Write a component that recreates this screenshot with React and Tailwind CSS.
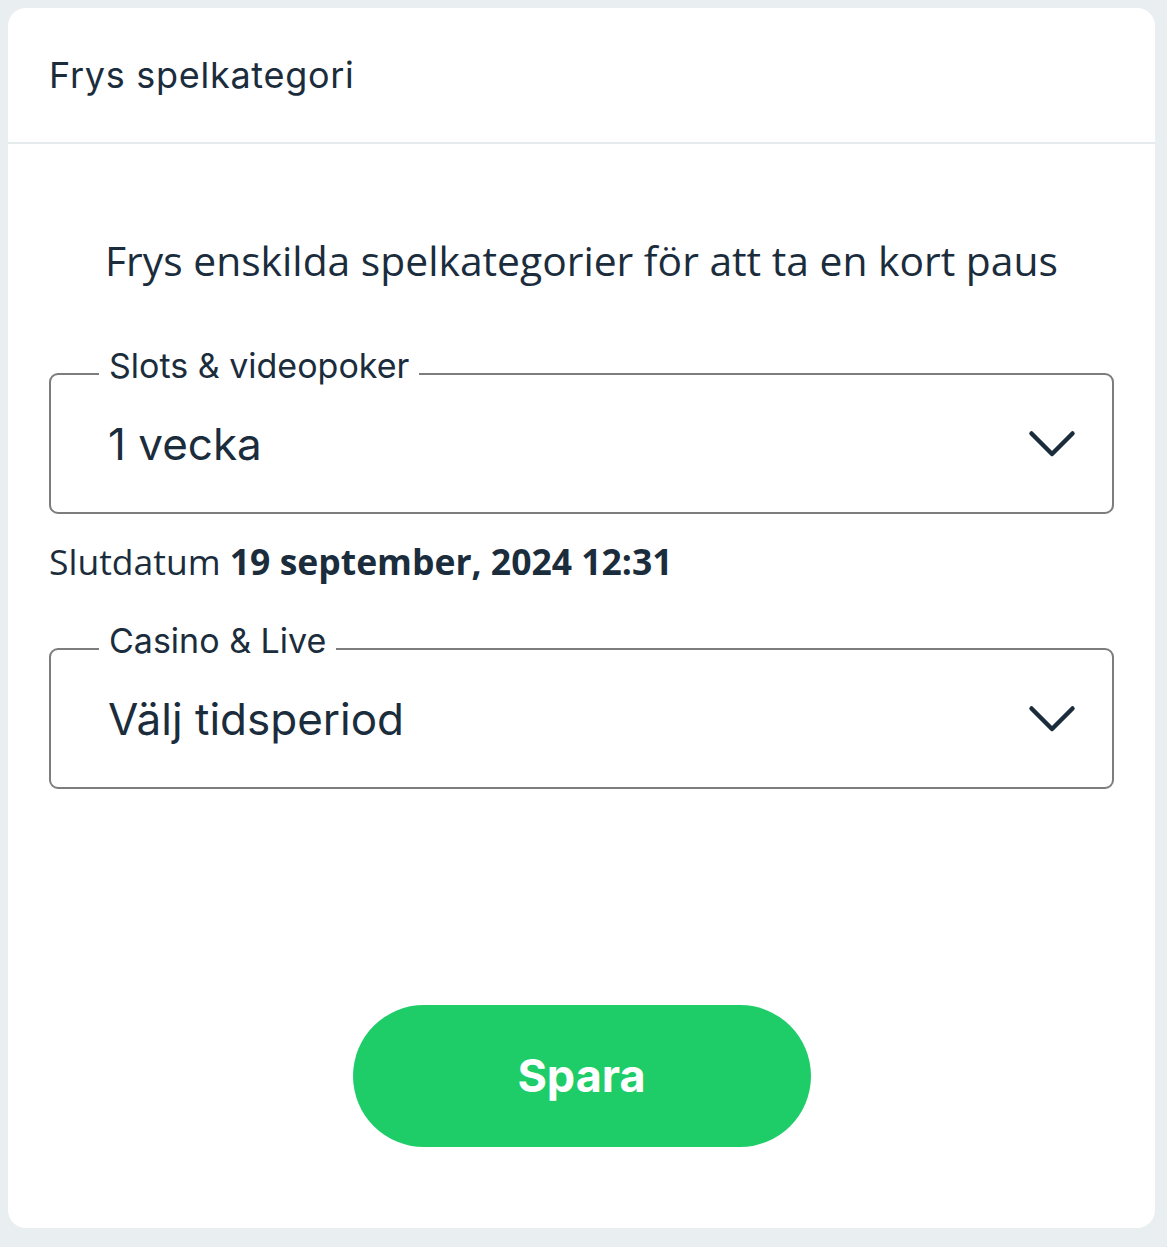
const Chevron = () => (
  <svg width="48" height="28" viewBox="0 0 48 28" fill="none" className="shrink-0">
    <path d="M3.5 3.5 L24 24 L44.5 3.5" stroke="#1b2d3c" strokeWidth="4.5" strokeLinecap="round" strokeLinejoin="round" />
  </svg>
)

const SelectField = ({ label, value }) => (
  <div className="relative h-[141px] border-2 border-[#7b7d7f] rounded-[9px] flex items-center justify-between pl-[57px] pr-[36px]">
    <span className="absolute left-[48px] -top-[29px] bg-white px-[10px] text-[34px] leading-[40px] text-[#1b2d3c] font-['Inter',sans-serif]">
      {label}
    </span>
    <span className="text-[44px] text-[#1b2d3c] font-['Inter',sans-serif]">{value}</span>
    <Chevron />
  </div>
)

export default function App() {
  return (
    <div className="min-h-[1247px] bg-[#e9eef0] p-2">
      <div className="bg-white rounded-[18px] h-[1220px] w-[1147px] flex flex-col">
        <div className="h-[136px] flex items-center px-[41px] border-b-2 border-[#e5eaec]">
          <h2 className="text-[36px] tracking-[0.02em] text-[#1b2d3c] font-['Inter',sans-serif]">Frys spelkategori</h2>
        </div>

        <div className="px-[41px] flex flex-col flex-1">
          <p className="text-center text-[40.8px] text-[#1b2d3c] font-['Open_Sans',sans-serif] mt-[88px] leading-[56px]">
            Frys enskilda spelkategorier för att ta en kort paus
          </p>

          <div className="mt-[85px]">
            <SelectField label="Slots & videopoker" value="1 vecka" />
          </div>

          <p className="mt-[22px] text-[35.5px] leading-[50px] text-[#1b2d3c] font-['Open_Sans',sans-serif]">
            Slutdatum <span className="font-bold">19 september, 2024 12:31</span>
          </p>

          <div className="mt-[62px]">
            <SelectField label="Casino & Live" value="Välj tidsperiod" />
          </div>

          <div className="flex justify-center mt-[216px]">
            <button className="w-[458px] h-[142px] rounded-full bg-[#1ecd68] text-white text-[45px] font-bold font-['Inter',sans-serif]">
              Spara
            </button>
          </div>
        </div>
      </div>
    </div>
  )
}
